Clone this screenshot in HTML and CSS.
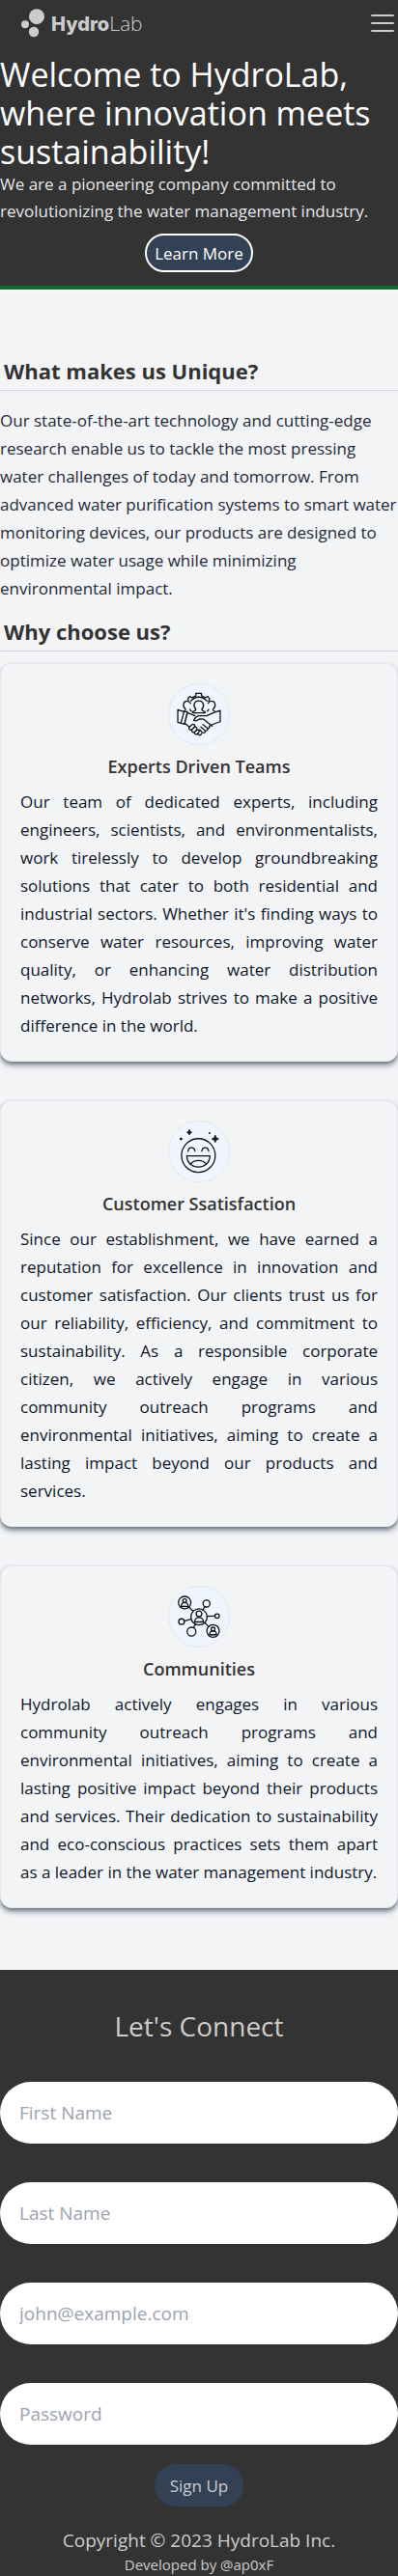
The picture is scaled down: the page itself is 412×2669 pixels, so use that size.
FILE: index.html
```html
<!DOCTYPE html>
<html lang="en">
<head>
<meta charset="utf-8">
<meta name="viewport" content="width=device-width, initial-scale=1">
<title>HydroLab</title>
<link rel="stylesheet" href="styles.css">
</head>
<body>
<header class="hero">
  <nav class="nav">
    <a class="logo" href="#" aria-label="HydroLab home">
      <svg class="logo-mark" viewBox="0 0 24 30" aria-hidden="true">
        <circle cx="16" cy="8.2" r="8"/><circle cx="4" cy="16.3" r="4"/><circle cx="13" cy="24" r="5.2"/>
      </svg>
      <span class="logo-text"><b class="logo-bold">Hydro</b>Lab</span>
    </a>
    <button class="menu" type="button" aria-label="Open menu">
      <svg class="menu-icon" viewBox="0 0 24 24" aria-hidden="true"><path d="M1 4h22M1 12h22M1 20h22"/></svg>
    </button>
  </nav>
  <h1 class="hero-title">Welcome to HydroLab, where innovation meets sustainability!</h1>
  <p class="hero-text">We are a pioneering company committed to revolutionizing the water management industry.</p>
  <button class="learn" type="button">Learn More</button>
</header>

<main class="main">
  <h2 class="heading">What makes us Unique?</h2>
  <p class="intro">Our state-of-the-art technology and cutting-edge research enable us to tackle the most pressing water challenges of today and tomorrow. From advanced water purification systems to smart water monitoring devices, our products are designed to optimize water usage while minimizing environmental impact.</p>
  <h2 class="heading">Why choose us?</h2>
  <div class="cards">
    <article class="card">
      <svg class="card-icon" viewBox="42 24 192 192" aria-hidden="true">
        <path d="M105 76l-3-5 6-8 8 4 8-4 4-2v-8h18v8l4 2 8 4 8-4 6 8-3 7"/>
        <path d="M112 78c8-10 16-13 25-13s18 3 27 13"/>
        <path d="M90 110c4-2 6-4 5-6-11-8-8-26 4-26 5 0 9 3 12 7M109 104c0 3 2 5 5 6"/>
        <path d="M188 110c-5-2-6-4-5-6 11-8 8-26-5-26-5 0-9 3-11 7M169 104c0 3-2 5-5 6"/>
        <path d="M118 115v-3c6-2 10-3 10-8-9-8-8-27 9-27s19 19 10 27c0 5 4 6 10 8v3"/>
        <path d="M70 106l20 6h11l-10 40-21-6zM90 112l-10 37M101 114l-9 37M101 116c9 3 18 5 24 9"/>
        <path d="M206 108l-19 6-24 11h-26c-8 2-13 8-16 15 8 3 14 0 20-5l12 1 27 22M171 158c11-6 20-10 35-14v-36"/>
        <path d="M92 149l15 12M121 116h36"/>
        <path d="M107 161l9-8c6-3 11 3 7 8l-7 8c-6 4-13-2-9-8zM116 169l7-7c6-3 11 3 7 8l-6 7c-6 4-12-2-8-8zM124 177l7-6c6-2 10 3 6 7l-4 5c-5 3-12 0-9-6z"/>
        <path d="M134 183c5 6 10 5 12-1M139 169l9 9c7 5 12 0 9-6M144 161l13 11c7 3 11-2 8-7M151 153l14 12c6 1 8-3 6-7"/>
      </svg>
      <h3 class="card-title">Experts Driven Teams</h3>
      <p class="card-text">Our team of dedicated experts, including engineers, scientists, and environmentalists, work tirelessly to develop groundbreaking solutions that cater to both residential and industrial sectors. Whether it's finding ways to conserve water resources, improving water quality, or enhancing water distribution networks, Hydrolab strives to make a positive difference in the world.</p>
    </article>
    <article class="card">
      <svg class="card-icon" viewBox="42 33 192 192" aria-hidden="true">
        <circle cx="136" cy="142" r="54"/>
        <path d="M103 128c1-15 20-15 22 0M147 128c1-15 20-15 22 0M99 143h74c0 48-74 48-74 0z"/>
        <path d="M111 169c12-15 38-15 50 0"/>
        <path class="solid" d="M107 60q1 7 8 8-7 1-8 8-1-7-8-8 7-1 8-8zM190 78q2 10 11 11-9 1-11 11-2-10-11-11 9-1 11-11z"/>
        <circle class="solid" cx="80" cy="89" r="3"/><circle class="dot" cx="172" cy="70" r="3"/>
      </svg>
      <h3 class="card-title">Customer Ssatisfaction</h3>
      <p class="card-text">Since our establishment, we have earned a reputation for excellence in innovation and customer satisfaction. Our clients trust us for our reliability, efficiency, and commitment to sustainability. As a responsible corporate citizen, we actively engage in various community outreach programs and environmental initiatives, aiming to create a lasting impact beyond our products and services.</p>
    </article>
    <article class="card">
      <svg class="card-icon" viewBox="42 41 192 192" aria-hidden="true">
        <circle cx="138" cy="138" r="26"/><circle cx="138" cy="128" r="9"/><path d="M124 154c0-19 28-19 28 0z"/>
        <circle cx="92" cy="92" r="20"/><circle cx="92" cy="86" r="6"/><path d="M81 104c0-16 22-16 22 0z"/>
        <circle cx="183" cy="183" r="20"/><circle cx="183" cy="177" r="6"/><path d="M172 195c0-16 22-16 22 0z"/>
        <circle cx="162" cy="95" r="11"/><circle cx="196" cy="135" r="7"/><circle cx="82" cy="153" r="9"/><circle cx="114" cy="185" r="14"/>
        <path d="M106 107l13 12M157 105l-7 11M164 136l25-1M91 151l21-6M121 172l6-12M157 157l12 12"/>
      </svg>
      <h3 class="card-title">Communities</h3>
      <p class="card-text">Hydrolab actively engages in various community outreach programs and environmental initiatives, aiming to create a lasting positive impact beyond their products and services. Their dedication to sustainability and eco-conscious practices sets them apart as a leader in the water management industry.</p>
    </article>
  </div>
</main>

<footer class="footer">
  <h2 class="footer-title">Let's Connect</h2>
  <form class="form">
    <input class="field" type="text" placeholder="First Name" aria-label="First Name">
    <input class="field" type="text" placeholder="Last Name" aria-label="Last Name">
    <input class="field" type="email" placeholder="john@example.com" aria-label="Email">
    <input class="field" type="password" placeholder="Password" aria-label="Password">
    <button class="signup" type="submit">Sign Up</button>
  </form>
  <p class="copyright">Copyright © 2023 HydroLab Inc.</p>
  <p class="credit">Developed by @ap0xF</p>
</footer>
</body>
</html>
```

FILE: styles.css
```css
*, *::before, *::after { box-sizing: border-box; }
body, h1, h2, h3, p { margin: 0; }
body {
  background: #f3f4f6;
  color: #333;
  font-family: "Segoe UI", "Open Sans", "Noto Sans", sans-serif;
  font-size: 17px;
}
button, input { font: inherit; border: 0; }
button { cursor: pointer; }

.hero {
  display: flex;
  flex-direction: column;
  background: #333;
  border-bottom: 4px solid #166534;
  padding-bottom: 14px;
}
.nav {
  display: flex;
  align-items: center;
  justify-content: space-between;
  height: 57px;
  padding: 0 4px 9px 22px;
}
.logo { display: flex; align-items: center; gap: 7px; color: #ccc; text-decoration: none; }
.logo-mark { width: 24px; height: 30px; fill: #ccc; }
.logo-text { font-size: 21px; line-height: 28px; font-weight: 300; }
.logo-bold { font-family: Inter, sans-serif; font-size: 20px; font-weight: 800; }
.menu { display: flex; padding: 0; background: none; }
.menu-icon { width: 24px; height: 24px; fill: none; stroke: #ccc; stroke-width: 2; stroke-linecap: round; }
.hero-title { color: #fff; font-size: 34px; line-height: 40px; font-weight: 400; }
.hero-text { color: #e5e7eb; line-height: 28px; }
.learn {
  align-self: center;
  height: 40px;
  margin-top: 9px;
  padding: 0 8px;
  border: 2px solid #fff;
  border-radius: 20px;
  background: #334155;
  color: #fff;
}

.main { padding: 68px 0 64px; }
.heading {
  padding: 0 4px 4px;
  border-bottom: 1px solid #d1d5db;
  font-size: 22px;
  line-height: 32px;
  font-weight: 700;
}
.intro { padding: 16px 0 14px; color: #1f2937; line-height: 29px; }
.cards { display: flex; flex-direction: column; gap: 40px; padding-top: 12px; }
.card {
  display: flex;
  flex-direction: column;
  gap: 8px;
  padding: 20px 20px 22px;
  border: 1px solid #e5e7eb;
  border-radius: 12px;
  box-shadow: 0 4px 6px -1px #6b7280, 0 2px 4px -2px #6b7280;
  background: #f3f4f6;
}
.card-icon {
  align-self: center;
  width: 64px;
  height: 64px;
  border: 1px solid #e5e7eb;
  border-radius: 50%;
  background: #eff6ff;
  fill: none;
  stroke: #111;
  stroke-width: 4;
  stroke-linejoin: round;
  stroke-linecap: round;
}
.solid { fill: #111; stroke-width: 3; }
.dot { fill: #111; stroke: none; }
.card-title { font-size: 18px; line-height: 28px; font-weight: 600; text-align: center; }
.card-text { color: #0f172a; line-height: 29px; text-align: justify; }

.footer { background: #333; color: #ccc; text-align: center; padding: 40px 0 0; }
.footer-title { font-size: 28px; line-height: 36px; font-weight: 400; }
.form { display: flex; flex-direction: column; gap: 40px; padding-top: 40px; }
.field {
  width: 100%;
  height: 64px;
  padding: 0 20px;
  border-radius: 32px;
  background: #fff;
  color: #333;
  font-size: 19px;
}
.field::placeholder { color: #9ca3af; opacity: 1; }
.signup {
  align-self: center;
  height: 44px;
  margin-top: -20px;
  padding: 0 16px;
  border-radius: 22px;
  background: #334155;
  color: #ccc;
}
.copyright { padding-top: 21px; font-size: 19px; line-height: 28px; }
.credit { font-size: 15px; line-height: 23px; }
```
